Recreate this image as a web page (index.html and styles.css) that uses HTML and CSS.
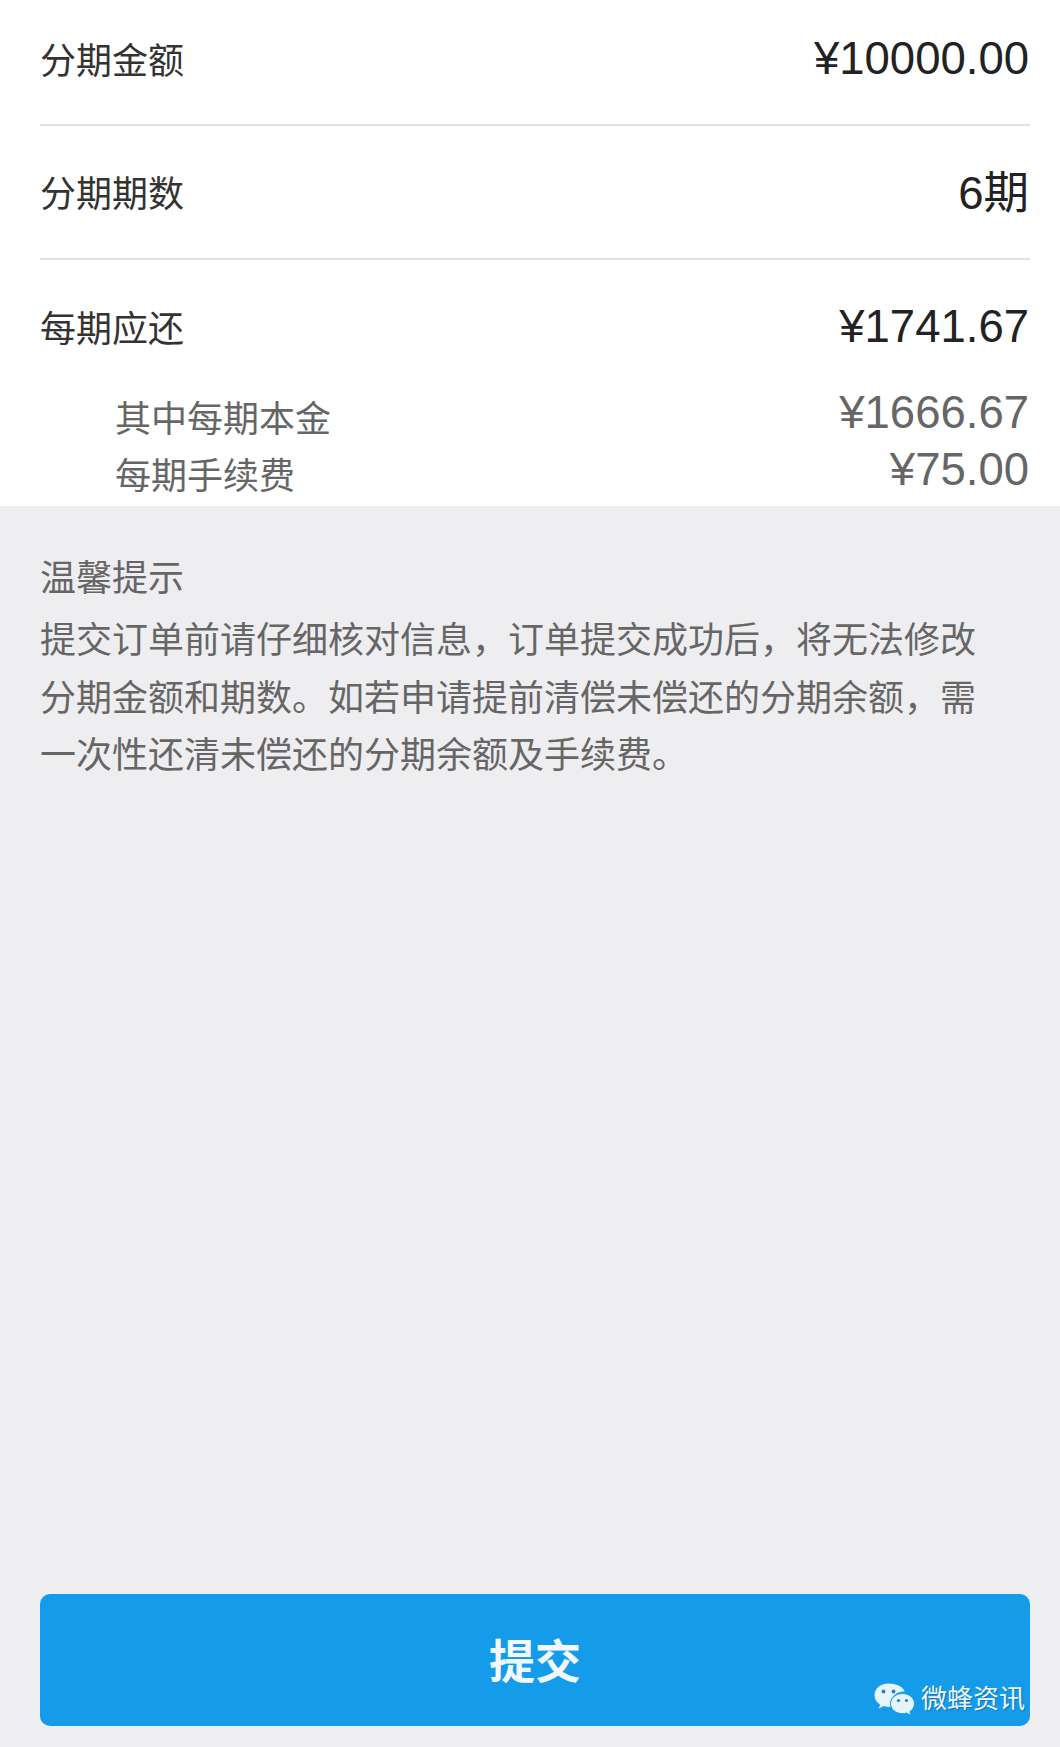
FILE: index.html
```html
<!DOCTYPE html>
<html lang="zh-CN">
<head>
    <meta charset="UTF-8">
    <meta name="viewport" content="width=device-width, initial-scale=1.0">
    <title>分期</title>
    <link rel="stylesheet" href="styles.css">
</head>
<body>
    <div class="summary">
        <div class="row line">
            <span class="label">分期金额</span>
            <span class="value">¥10000.00</span>
        </div>
        <div class="row line">
            <span class="label">分期期数</span>
            <span class="value count">6期</span>
        </div>
        <div class="row">
            <span class="label">每期应还</span>
            <span class="value">¥1741.67</span>
        </div>
        <div class="sub-row first">
            <span class="label">其中每期本金</span>
            <span class="value">¥1666.67</span>
        </div>
        <div class="sub-row">
            <span class="label">每期手续费</span>
            <span class="value">¥75.00</span>
        </div>
    </div>
    <div class="notice">
        <h4>温馨提示</h4>
        <p>提交订单前请仔细核对信息，订单提交成功后，将无法修改分期金额和期数。如若申请提前清偿未偿还的分期余额，需一次性还清未偿还的分期余额及手续费。</p>
    </div>
    <div class="footer">
        <button class="submit">提交</button>
    </div>
    <div class="watermark">
        <svg width="42" height="38" viewBox="0 0 42 38">
            <path class="bubble" d="M15.5 1C7.500 1 1 6.500 1 13.200c0 3.900 2.200 7.300 5.600 9.500L5 27.500l5.600-2.900c1.500.5 3.100.8 4.900.8 1 0 2-.1 3-.3-.4-1.200-.6-2.400-.6-3.600 0-6.400 5.900-11.600 13.300-11.600h1.100C30.700 4.700 23.700 1 15.500 1z"/>
            <circle class="eye" cx="10.500" cy="9.500" r="1.900"/>
            <circle class="eye" cx="20.500" cy="9.500" r="1.900"/>
            <path class="bubble" d="M29.500 11.500C22.800 11.500 17.500 16 17.500 21.600s5.300 10.100 12 10.100c1.400 0 2.700-.2 4-.6l4.600 2.500-1.200-4c3-1.900 4.600-4.800 4.600-8 0-5.600-5.300-10.100-12-10.100z"/>
            <circle class="eye" cx="25.500" cy="18.500" r="1.600"/>
            <circle class="eye" cx="33.500" cy="18.500" r="1.600"/>
        </svg>
        <span class="mark-text">微蜂资讯</span>
    </div>
</body>
</html>
```

FILE: styles.css
```css
* {
    box-sizing: border-box;
    margin: 0;
    padding: 0;
}
html, body {
    height: 100%;
}
body {
    font-family: "Liberation Sans", "Noto Sans CJK SC", sans-serif;
    background: #eeeef0;
    display: flex;
    flex-direction: column;
    position: relative;
    overflow: hidden;
}
.summary {
    background: #fff;
    padding: 0 30px 0 40px;
    height: 506px;
    flex-shrink: 0;
}
.row {
    display: flex;
    justify-content: space-between;
    align-items: center;
    height: 134px;
    color: #222;
}
.row:first-child {
    height: 126px;
    padding-bottom: 7px;
}
.row .label {
    margin-bottom: 2px;
    color: #333;
}
.line {
    border-bottom: 2px solid #e2e2e2;
}
.label {
    font-size: 36px;
}
.value {
    font-size: 45.500px;
    margin-right: 1px;
}
.count {
    margin-bottom: 6px;
}
.sub-row {
    display: flex;
    justify-content: space-between;
    height: 57px;
    line-height: 57px;
    padding-left: 75px;
    color: #666;
}
.sub-row .label {
    position: relative;
    top: 7px;
}
.sub-row.first {
    margin-top: -10px;
}
.notice {
    padding: 44px 84px 0 40px;
    color: #666;
    font-size: 36px;
}
.notice h4 {
    font-weight: normal;
    line-height: 57px;
}
.notice p {
    line-height: 57.500px;
    margin-top: 5px;
}
.footer {
    margin-top: auto;
    padding: 0 30px 21px 40px;
}
.submit {
    display: block;
    width: 100%;
    height: 132px;
    padding-bottom: 4px;
    border: none;
    border-radius: 10px;
    background: #149ceb;
    color: #f2f8fd;
    font-family: inherit;
    font-size: 46px;
    font-weight: bold;
}
.watermark {
    position: absolute;
    right: 35px;
    bottom: 24px;
    display: flex;
    align-items: center;
    gap: 6px;
    color: #eef7fd;
    font-size: 26px;
}
.mark-text {
    margin-bottom: 8px;
    text-shadow: 1px 1px 1px rgba(20, 70, 110, 0.5);
}
.bubble {
    fill: #e6f4fc;
    stroke: #149ceb;
    stroke-width: 1;
}
.eye {
    fill: #2f7fb5;
}
```
